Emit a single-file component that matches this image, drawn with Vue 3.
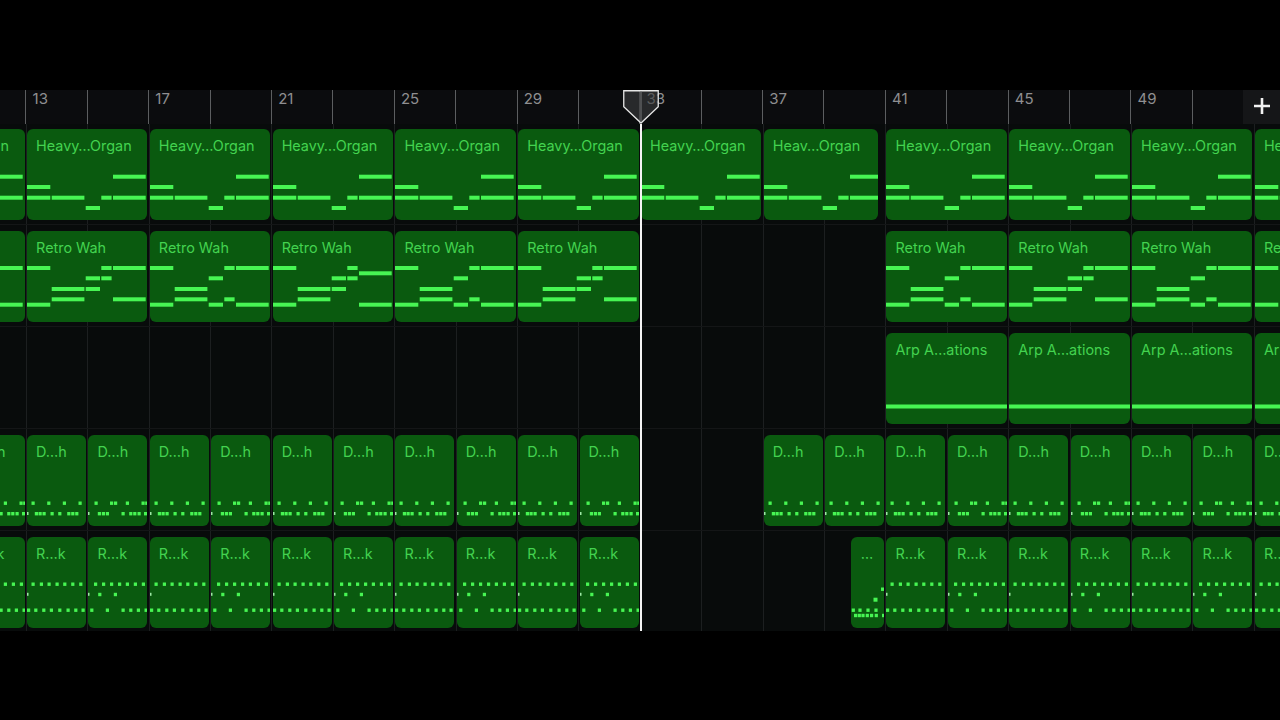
<script setup>
const COLS = 24

// note rows are [x, y, w] in px from the clip's top left corner
function row(y, h, xs) {
  return xs.map(x => ({ x, y, w: 3.2, h }))
}
function bars(y, items) {
  return items.map(([x, w]) => ({ x, y, w, h: 4 }))
}

const organ = [
  ...bars(45.7, [[86, 32.7]]),
  ...bars(56, [[0, 23.3]]),
  ...bars(66.7, [[0, 23.3], [24.7, 32.7], [74.3, 10.3], [86, 32.7]]),
  ...bars(77, [[58.7, 14.3]]),
]

const wahA = [
  ...bars(35, [[0, 23.3], [74.3, 10.3], [86, 32.7]]),
  ...bars(45.3, [[58.7, 14.3], [74.3, 10.3]]),
  ...bars(56, [[24.7, 32.7], [58.7, 14.3]]),
  ...bars(66.3, [[24.7, 32.7], [86, 32.7]]),
  ...bars(71.7, [[0, 23.3]]),
]
const wahB = [
  ...bars(35, [[0, 23.3], [74.3, 10.3], [86, 32.7]]),
  ...bars(45.3, [[58.7, 14.3]]),
  ...bars(56, [[24.7, 32.7]]),
  ...bars(66.3, [[24.7, 32.7], [74.3, 10.3]]),
  ...bars(71.7, [[0, 23.3], [58.7, 14.3], [86, 32.7]]),
]
const wahC = [
  ...bars(35, [[0, 23.3], [74.3, 10.3]]),
  ...bars(40.3, [[86, 32.7]]),
  ...bars(45.3, [[58.7, 14.3], [74.3, 10.3]]),
  ...bars(56, [[24.7, 32.7], [58.7, 14.3]]),
  ...bars(66.3, [[24.7, 32.7]]),
  ...bars(71.7, [[0, 23.3], [86, 32.7]]),
]
// only the opening notes of the last clip are on screen
const wahEnd = bars(35, [[0, 23.3]]).concat(bars(71.7, [[0, 23.3]]))

const arp = bars(71.5, [[0, 130]])

const drumA = [
  ...row(66.5, 3.4, [4.5, 20.2, 35.8, 51.5]),
  ...row(77, 3.4, [7.8, 11.5, 15.5, 23.5, 31.2, 40.2, 44.2, 48.2]),
]
const drumB = [
  ...row(66.5, 3.4, [6.5, 22, 26, 37.8, 53.5, 57.2]),
  ...row(77, 3.4, [9.8, 13.8, 17.8, 33.5, 41.2, 45.2, 49.5, 56]),
]

const rockA = [
  ...row(45.5, 3.4, [4.5, 12.8, 20.5, 28.5, 36.2, 44.2, 52.2]),
  ...row(71.5, 3.4, [0, 7.2, 15.2, 22.8, 31.2, 39.5, 47.2, 54.5]),
]
const rockB = [
  ...row(45.5, 3.4, [6, 14, 22, 30, 37.8, 45.8, 53.8]),
  ...row(55.8, 3.4, [10.2, 25.8]),
  ...row(71.5, 3.4, [2.2, 17.8, 33.5, 41.2, 48.8, 56.5]),
]
const rockShort = [
  ...row(50.5, 3.4, [30]),
  { x: 22.5, y: 60.7, w: 4, h: 4 },
  ...row(71.5, 3.4, [0.7, 7.4, 15.4, 23.4]),
  ...row(76.8, 3.4, [3, 6.7, 10.4, 14.7, 19, 23.7, 31]),
]

function clip(col, span, name, notes, extra) {
  return { id: col, col, span, name, notes, tickY: null, ...extra }
}

// odd drum/rock columns play the A pattern, even ones the B pattern
function beats(col, name, a, b, tickY) {
  const even = col % 2 === 0
  return clip(col, 1, name, even ? b : a, { tickY })
}
const beatCols = [2, 3, 4, 5, 6, 7, 8, 9, 10, 11, 12]
const lateCols = [17, 18, 19, 20, 21, 22, 23]

const lanes = [
  [
    ...[1, 3, 5, 7, 9, 11, 13].map(c => clip(c, 2, 'Heavy…Organ', organ)),
    clip(15, 2, 'Heav…Organ', organ, { width: 114 }),
    ...[17, 19, 21, 23].map(c => clip(c, 2, 'Heavy…Organ', organ)),
  ],
  [
    clip(1, 2, 'Retro Wah', wahB),
    clip(3, 2, 'Retro Wah', wahA),
    clip(5, 2, 'Retro Wah', wahB),
    clip(7, 2, 'Retro Wah', wahC),
    clip(9, 2, 'Retro Wah', wahB),
    clip(11, 2, 'Retro Wah', wahA),
    clip(17, 2, 'Retro Wah', wahB),
    clip(19, 2, 'Retro Wah', wahA),
    clip(21, 2, 'Retro Wah', wahB),
    clip(23, 2, 'Retro Wah', wahEnd),
  ],
  [17, 19, 21, 23].map(c => clip(c, 2, 'Arp A…ations', arp)),
  [
    ...beatCols.map(c => beats(c, 'D…h', drumA, drumB, 77)),
    clip(15, 1, 'D…h', drumA, { tickY: 77 }),
    clip(16, 1, 'D…h', drumA, { tickY: 77 }),
    ...lateCols.map(c => beats(c, 'D…h', drumA, drumB, 77)),
  ],
  [
    ...beatCols.map(c => beats(c, 'R…k', rockA, rockB, 55.8)),
    clip(16, 1, '…', rockShort, { short: true }),
    ...lateCols.map(c => beats(c, 'R…k', rockA, rockB, 55.8)),
  ],
]

// bar 9 is off screen and bar 53 sits under the add button
const ticks = Array.from({ length: COLS }, (_, i) => {
  const bar = 9 + i * 2
  const labelled = i % 2 === 0 && bar > 9 && bar < 53
  return { id: i, label: labelled ? String(bar) : '' }
})

function clipStyle(c) {
  return {
    gridColumn: c.col + ' / span ' + c.span,
    width: c.width ? c.width + 'px' : null,
  }
}
</script>

<template>
  <div class="page">
    <div class="arrange">
      <div class="ruler">
        <div v-for="t in ticks" :key="t.id" class="tick">{{ t.label }}</div>
      </div>

      <div class="lanes">
        <div v-for="(lane, i) in lanes" :key="i" class="lane">
          <div
            v-for="c in lane"
            :key="c.id"
            class="clip"
            :class="{ short: c.short }"
            :style="clipStyle(c)"
          >
            <svg class="notes">
              <rect v-if="c.tickY" class="tick-mark" x="0" :y="c.tickY" width="1.5" height="3" />
              <rect
                v-for="(n, j) in c.notes"
                :key="j"
                :x="n.x"
                :y="n.y"
                :width="n.w"
                :height="n.h"
              />
            </svg>
            <span class="name">{{ c.name }}</span>
          </div>
        </div>
      </div>

      <button class="add" aria-label="Add section">
        <svg width="18" height="18" viewBox="0 0 18 18">
          <path d="M9 1v16M1 9h16" stroke="#f2f2f2" stroke-width="2.6" fill="none" />
        </svg>
      </button>

      <div class="playhead">
        <svg width="36" height="34" viewBox="0 0 36 34">
          <path d="M0.75 0.75h34.5v16L18 33 0.75 16.7z" fill="#3a3b3d" fill-opacity=".62" stroke="#e6e6e6" stroke-width="1.3" />
          <path d="M18 1v31" stroke="#77787a" stroke-width="1" />
        </svg>
        <div class="line"></div>
      </div>
    </div>
  </div>
</template>

<style scoped>
.page {
  height: 720px;
  width: 1280px;
  overflow: hidden;
  padding-top: 90px;
  box-sizing: border-box;
  background: #000;
  font-family: Inter, "Liberation Sans", sans-serif;
}
.arrange {
  position: relative;
  width: 1280px;
  height: 541px;
  overflow: hidden;
}
.ruler {
  display: grid;
  grid-template-columns: repeat(24, 61.4px);
  margin-left: -97.4px;
  height: 34px;
  width: 1474px;
  background: #0b0c0e;
}
.tick {
  border-left: 1px solid #5c5e60;
  padding: 0 0 0 6.2px;
  font-size: 15px;
  line-height: 17px;
  color: #8f8f91;
}
.lanes {
  margin-left: -97.4px;
  width: 1474px;
  background-color: #080b0b;
  background-image: repeating-linear-gradient(to right, #1c1f20 0 1px, transparent 1px 61.4px);
}
.lane {
  display: grid;
  grid-template-columns: repeat(24, 61.4px);
  grid-template-rows: 91px;
  padding: 6px 0 4px;
  border-bottom: 1px solid #141617;
}
.lane:first-child {
  padding-top: 5px;
}
.lane:last-child {
  padding-bottom: 3px;
  border-bottom: 0;
}
.clip {
  display: grid;
  margin: 0 0.8px 0 1.6px;
  border-radius: 6px;
  background: #0a5a0f;
  overflow: hidden;
}
.clip > * {
  grid-area: 1 / 1;
}
.clip.short {
  margin-left: 27.2px;
}
.clip.short .name {
  padding-left: 10px;
}
.notes {
  width: 100%;
  height: 91px;
  fill: #47f553;
}
.tick-mark {
  fill: #9be8a4;
}
.name {
  padding: 7px 0 0 9.1px;
  font-size: 14.4px;
  line-height: 20px;
  color: #43d34f;
  white-space: nowrap;
}
.add {
  position: absolute;
  top: 0;
  right: 0;
  width: 37px;
  height: 34px;
  padding: 0 0 3px;
  box-sizing: border-box;
  border: 0;
  background: #151618;
  display: flex;
  align-items: center;
  justify-content: center;
}
.playhead {
  position: absolute;
  top: 0;
  left: 623px;
  width: 36px;
  height: 541px;
  display: flex;
  flex-direction: column;
  align-items: center;
}
.playhead svg {
  display: block;
  flex: none;
}
.line {
  width: 2px;
  flex: 1;
  background: #f4f4f4;
}
</style>

<style>
html, body {
  margin: 0;
  background: #000;
}
</style>
